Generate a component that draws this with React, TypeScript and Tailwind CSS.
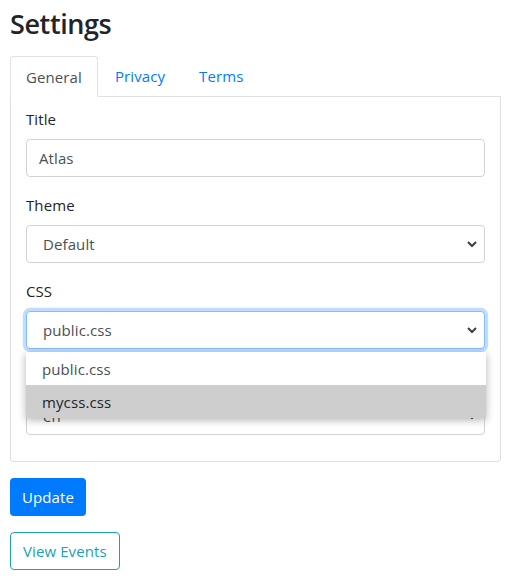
import React from "react";

const font = { fontFamily: '"Open Sans", "Noto Sans", sans-serif' };

function Chevron() {
  return (
    <svg
      width="10"
      height="7"
      viewBox="0 0 10 7"
      className="pointer-events-none absolute right-[7px] top-1/2 -translate-y-1/2"
    >
      <path d="M1 1.5 L5 5.5 L9 1.5" fill="none" stroke="#3b3f44" strokeWidth="2" />
    </svg>
  );
}

function Select({ value, focused }: { value: string; focused?: boolean }) {
  return (
    <div
      className={`relative flex h-[38px] items-center rounded-[4px] border bg-white pl-[16px] text-[#495057] ${
        focused
          ? "border-[#80bdff] shadow-[0_0_0_3.2px_rgba(0,123,255,0.25)]"
          : "border-[#ced4da]"
      }`}
    >
      {value}
      <Chevron />
    </div>
  );
}

export default function App() {
  return (
    <div
      className="min-h-[584px] bg-white px-[10px] pt-[1px] text-[15px] leading-[24px] tracking-[0.1px] text-[#212529]"
      style={font}
    >
      <h3 className="pt-[6px] text-[27px] font-semibold leading-[34px] tracking-[-0.4px]">Settings</h3>

      <div className="mt-[15px] flex h-[41px] border-b border-[#dee2e6]">
        <div className="-mb-px rounded-t-[4px] border border-[#dee2e6] border-b-white bg-white px-[15px] pt-[8px] text-[#495057]">
          General
        </div>
        <div className="px-[17px] pt-[8px] text-[#007bff]">Privacy</div>
        <div className="px-[17px] pt-[8px] text-[#007bff]">Terms</div>
      </div>

      <div className="rounded-b-[4px] border border-t-0 border-[#dfdfdf] px-[15px] pb-[10px] pt-[10px]">
        <div className="mb-[16px]">
          <div className="mb-[8px]">Title</div>
          <div className="flex h-[38px] items-center rounded-[4px] border border-[#ced4da] px-[12px] text-[#495057]">
            Atlas
          </div>
        </div>

        <div className="mb-[16px]">
          <div className="mb-[8px]">Theme</div>
          <Select value="Default" />
        </div>

        <div className="relative z-10 mb-[16px]">
          <div className="mb-[8px]">CSS</div>
          <Select value="public.css" focused />
          <div className="absolute left-0 right-[-1px] top-[73px] bg-white text-[#495057] shadow-[0_2px_8px_rgba(0,0,0,0.3)]">
            <div className="flex h-[33px] items-center pl-[16px]">public.css</div>
            <div className="flex h-[33px] items-center bg-[#cecece] pl-[16px] text-[#212529]">mycss.css</div>
          </div>
        </div>

        <div className="mb-[16px]">
          <div className="mb-[8px]">Language</div>
          <Select value="en" />
        </div>
      </div>

      <button className="mt-[16px] block h-[38px] rounded-[4px] bg-[#007bff] px-[12px] text-white">
        Update
      </button>
      <button className="mt-[16px] block h-[38px] rounded-[4px] border border-[#17a2b8] px-[12px] text-[#17a2b8]">
        View Events
      </button>
    </div>
  );
}
